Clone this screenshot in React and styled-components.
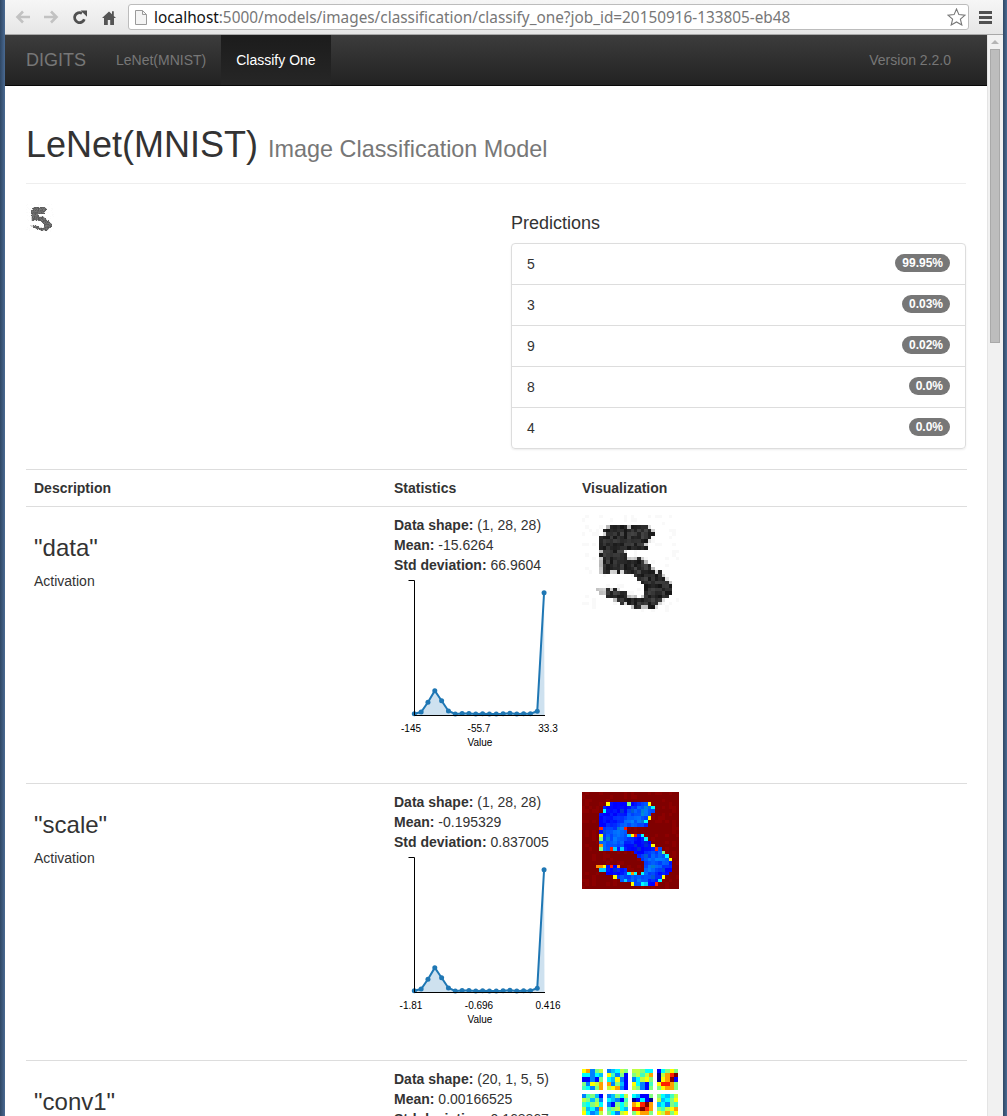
import React from "react";
import styled, { createGlobalStyle } from "styled-components";

const GlobalStyle = createGlobalStyle`
	html, body {
		margin: 0;
		height: 100%;
		overflow: hidden;
		background: #fff;
	}
	body {
		font-family: "Liberation Sans", Arial, sans-serif;
		font-size: 14px;
		line-height: 20px;
		color: #333;
	}
`;

const Win = styled.div`
	display: flex;
	width: 1007px;
	height: 1116px;
	overflow: hidden;
`;

const WinEdge = styled.div`
	flex: none;
	width: ${p => p.$w}px;
	background: linear-gradient(90deg, #2f4764, #4a6a92);
`;

const Main = styled.div`
	flex: 1;
	min-width: 0;
	display: flex;
	flex-direction: column;
`;

const Toolbar = styled.div`
	flex: none;
	height: 34px;
	display: flex;
	align-items: center;
	background: linear-gradient(#f6f6f6, #e6e6e6);
	border-bottom: 1px solid #a8a8a8;
`;

const ToolIcon = styled.svg`
	flex: none;
	display: block;
	margin-left: ${p => p.$ml}px;
`;

const Omnibox = styled.div`
	flex: none;
	width: 841px;
	height: 26px;
	box-sizing: border-box;
	margin-left: 12px;
	padding: 0 2px 0 6px;
	display: flex;
	align-items: center;
	background: #fff;
	border: 1px solid #bcbcbc;
	border-radius: 3px;
`;

const UrlText = styled.div`
	flex: 1;
	margin-left: 7px;
	font-family: "Noto Sans", sans-serif;
	font-size: 15.33px;
	white-space: nowrap;
	color: #777;
	b {
		font-weight: 400;
		color: #111;
	}
`;

const Content = styled.div`
	flex: 1;
	min-height: 0;
	display: flex;
`;

const Page = styled.div`
	flex: 1;
	min-width: 0;
`;

const Navbar = styled.div`
	height: 50px;
	display: flex;
	align-items: stretch;
	padding: 0 36px 0 21px;
	background: linear-gradient(#3c3c3c, #222);
	border-bottom: 1px solid #080808;
`;

const Brand = styled.div`
	display: flex;
	align-items: center;
	font-size: 18px;
	color: #777;
	margin-right: 30px;
`;

const NavLink = styled.div`
	display: flex;
	align-items: center;
	padding: 0 15px;
	margin-left: ${p => (p.$active ? 0 : -15)}px;
	color: ${p => (p.$active ? "#fff" : "#777")};
	background: ${p => (p.$active ? "linear-gradient(#1c1c1c, #262626)" : "none")};
`;

const NavRight = styled.div`
	margin-left: auto;
	display: flex;
	align-items: center;
	color: #777;
`;

const Wrap = styled.div`
	padding: 0 20px 0 21px;
`;

const PageHeader = styled.div`
	margin-right: 1px;
	padding: 39px 0 14px;
	border-bottom: 1px solid #eee;
`;

const Title = styled.h1`
	margin: 0;
	font-size: 36px;
	font-weight: 500;
	line-height: 40px;
	small {
		font-size: 23.4px;
		font-weight: 400;
		color: #777;
	}
`;

const TopRow = styled.div`
	display: flex;
	justify-content: space-between;
	margin-right: 1px;
	margin-bottom: 20px;
`;

const InputImage = styled.div`
	margin-top: 20px;
`;

const PredictionCol = styled.div`
	width: 455px;
	padding-top: 29px;
`;

const PredictionTitle = styled.div`
	font-size: 18px;
	line-height: 20px;
	margin-bottom: 10px;
`;

const PredictionList = styled.div`
	border: 1px solid #ddd;
	border-radius: 4px;
	box-shadow: 0 1px 2px rgba(0, 0, 0, 0.075);
`;

const PredictionItem = styled.div`
	display: flex;
	justify-content: space-between;
	align-items: flex-start;
	padding: 10px 15px;
	& + & {
		border-top: 1px solid #ddd;
	}
`;

const Badge = styled.span`
	padding: 3px 7px;
	font-size: 12px;
	font-weight: 700;
	line-height: 12px;
	color: #fff;
	background: #777;
	border-radius: 10px;
`;

const TableRow = styled.div`
	display: grid;
	grid-template-columns: 360px 188px 1fr;
	border-top: ${p => (p.$head ? "1px solid #ddd" : "0")};
	border-bottom: 1px solid #ddd;
`;

const HeadCell = styled.div`
	padding: 8px;
	font-weight: 700;
`;

const Cell = styled.div`
	padding: 8px;
`;

const LayerName = styled.h3`
	margin: 20px 0 10px;
	font-size: 24px;
	font-weight: 500;
	line-height: 26px;
`;

const StatLine = styled.div`
	white-space: nowrap;
	b {
		font-weight: 700;
	}
`;

const ChartSvg = styled.svg`
	display: block;
	overflow: visible;
	text {
		font-family: "Liberation Sans", Arial, sans-serif;
		font-size: 10px;
		fill: #000;
		text-anchor: middle;
	}
`;

const PixelSvg = styled.svg`
	display: block;
	shape-rendering: crispEdges;
`;

const TileGrid = styled.div`
	display: grid;
	grid-template-columns: repeat(4, 21px);
	gap: 4px;
`;

const Scrollbar = styled.div`
	flex: none;
	width: 16px;
	box-sizing: border-box;
	padding: 5px 3px 0 2px;
	background: #f1f1f1;
	border-left: 1px solid #e4e4e4;
`;

const ScrollArrow = styled.div`
	width: 0;
	height: 0;
	margin: 0 auto 5px;
	border-left: 4px solid transparent;
	border-right: 4px solid transparent;
	border-bottom: 4px solid #b5b5b5;
`;

const ScrollThumb = styled.div`
	height: 294px;
	background: #bdbdbd;
	border: 1px solid #a9a9a9;
	box-sizing: border-box;
`;

// the digit, as runs of columns per row of the 28x28 input
const DIGIT = {
	3: [[7, 19]],
	4: [[6, 20]],
	5: [[6, 20]],
	6: [[5, 19]],
	7: [[5, 19]],
	8: [[5, 18]],
	9: [[5, 18]],
	10: [[5, 12]],
	11: [[5, 12]],
	12: [[5, 17]],
	13: [[5, 18]],
	14: [[5, 19]],
	15: [[5, 20]],
	16: [[5, 22]],
	17: [[15, 23]],
	18: [[16, 24]],
	19: [[17, 25]],
	20: [[18, 25]],
	21: [[4, 10], [18, 25]],
	22: [[5, 12], [18, 25]],
	23: [[7, 15], [17, 24]],
	24: [[9, 23]],
	25: [[11, 22]],
	26: [[14, 21]]
};

const inDigit = (r, c) => (DIGIT[r] || []).some(([a, b]) => c >= a && c <= b);

const isEdge = (r, c) =>
	!inDigit(r - 1, c) || !inDigit(r + 1, c) || !inDigit(r, c - 1) || !inDigit(r, c + 1);

const noise = (r, c) => {
	const v = Math.sin(r * 127.1 + c * 311.7 + 3.3) * 43758.5453;
	return v - Math.floor(v);
};

const grey = v => `rgb(${v},${v},${v})`;

const greyCell = fade => (r, c) => {
	const n = noise(r, c);
	let v;
	if (inDigit(r, c)) {
		v = isEdge(r, c) && n > 0.6 ? 110 + Math.round(n * 120) : 20 + Math.round(n * 50);
	} else {
		v = n > 0.85 ? 249 : 255;
	}
	return grey(Math.round(255 - (255 - v) * fade));
};

const HOT = ["#00ffff", "#80ff80", "#ffff00", "#ff9000", "#ff2000", "#00d0ff"];

const jetCell = (r, c) => {
	const n = noise(r, c);
	if (!inDigit(r, c)) return n > 0.78 ? "#8c0000" : "#800000";
	if (isEdge(r, c) && n > 0.62) return HOT[Math.floor(n * 97) % HOT.length];
	// blue patches that drift slowly across the digit
	const g = Math.round(55 + 50 * Math.sin(r / 2.6 + c / 3.1) + 70 * (n - 0.5));
	return `rgb(0,${Math.max(0, g)},${n > 0.9 ? 215 : 255})`;
};

const PixelMap = ({ size, colorAt }) => {
	const cells = [];
	for (let r = 0; r < 28; r++) {
		for (let c = 0; c < 28; c++) {
			cells.push(<rect key={r + "-" + c} x={c} y={r} width="1.02" height="1.02" fill={colorAt(r, c)} />);
		}
	}
	return (
		<PixelSvg width={size} height={size} viewBox="0 0 28 28">
			{cells}
		</PixelSvg>
	);
};

const JET = {
	n: "#00008f",
	b: "#0000ff",
	a: "#0080ff",
	s: "#00bfff",
	c: "#00ffff",
	t: "#40ffbf",
	g: "#80ff80",
	l: "#bfff40",
	y: "#ffff00",
	o: "#ff9f00",
	r: "#ff2000",
	d: "#800000"
};

const TILES = [
	["yoagl", "ccacs", "bbabg", "gaylo", "tcago"],
	["asclg", "ytagb", "csyab", "oagsb", "lyoab"],
	["llgcc", "gltlo", "aclyg", "ycabt", "lgabg"],
	["bcgyg", "nlord", "nyodb", "yrrog", "gyoog"],
	["atgsb", "lgsga", "tcglc", "lscao", "ycasl"],
	["asgcl", "csabt", "abgcg", "tglcs", "gcaly"],
	["csbbg", "nbcbn", "oyrdo", "rrdro", "gyoog"],
	["gcstl", "lscgy", "scagt", "gtlyo", "ylogy"],
	["oasyg", "cgbta", "ltaoy", "sgcbl", "yoslg"],
	["tylab", "cgoal", "bsytc", "gacoy", "labts"],
	["gcoas", "lybsg", "atgcy", "oscbl", "tygao"],
	["bayog", "csgtl", "ylabc", "gosty", "atlyg"]
];

const Tile = ({ rows }) => (
	<PixelSvg width="21" height="21" viewBox="0 0 5 5">
		{rows.map((row, r) =>
			row.split("").map((k, c) => (
				<rect key={r + "-" + c} x={c} y={r} width="1.01" height="1.01" fill={JET[k]} />
			))
		)}
	</PixelSvg>
);

// histogram heights, same shape for both layers at this scale
const HIST = [138.7, 137, 127.3, 115.7, 125.7, 136, 139, 138.5, 138.5, 139, 138.7, 139, 139, 138.7, 138.2, 139, 138.7, 138.7, 136.3, 17.7];
const HIST_X = i => 20.3 + i * 6.83;

const Histogram = ({ ticks }) => {
	const pts = HIST.map((y, i) => `${HIST_X(i)},${y}`).join(" ");
	return (
		<ChartSvg width="170" height="200" viewBox="0 0 170 200">
			<polygon points={`20.3,140 ${pts} 150.5,140`} fill="#1f77b4" fillOpacity="0.22" />
			<polyline points={pts} fill="none" stroke="#1f77b4" strokeWidth="2" />
			{HIST.map((y, i) => (
				<circle key={i} cx={HIST_X(i)} cy={y} r="2.5" fill="#1f77b4" />
			))}
			<path d="M14.5 5.5H20.5V140.5H151" fill="none" stroke="#000" strokeWidth="1" />
			<text x="17" y="157">{ticks[0]}</text>
			<text x="85" y="157">{ticks[1]}</text>
			<text x="154" y="157">{ticks[2]}</text>
			<text x="86" y="171">Value</text>
		</ChartSvg>
	);
};

const LayerRow = ({ name, shape, mean, std, ticks, children }) => (
	<TableRow>
		<Cell>
			<LayerName>"{name}"</LayerName>
			Activation
		</Cell>
		<Cell>
			<StatLine><b>Data shape:</b> {shape}</StatLine>
			<StatLine><b>Mean:</b> {mean}</StatLine>
			<StatLine><b>Std deviation:</b> {std}</StatLine>
			{ticks && <Histogram ticks={ticks} />}
		</Cell>
		<Cell>{children}</Cell>
	</TableRow>
);

const PREDICTIONS = [
	["5", "99.95%"],
	["3", "0.03%"],
	["9", "0.02%"],
	["8", "0.0%"],
	["4", "0.0%"]
];

const App = () => (
	<Win>
		<GlobalStyle />
		<WinEdge $w={5} />
		<Main>
			<Toolbar>
				<ToolIcon $ml={10} width="15" height="14" viewBox="0 0 15 14" fill="none" stroke="#c2c2c2" strokeWidth="2.6">
					<path d="M8 1.5L2.5 7L8 12.5M2.5 7H15" />
				</ToolIcon>
				<ToolIcon $ml={14} width="15" height="14" viewBox="0 0 15 14" fill="none" stroke="#c2c2c2" strokeWidth="2.6">
					<path d="M7 1.5L12.5 7L7 12.5M12.5 7H0" />
				</ToolIcon>
				<ToolIcon $ml={13} width="15" height="15" viewBox="0 0 15 15">
					<path d="M12.3 9.2A5 5 0 1 1 10 3.2" fill="none" stroke="#505050" strokeWidth="2.8" />
					<path d="M8.6 0.5H15V6.8Z" fill="#505050" />
				</ToolIcon>
				<ToolIcon $ml={15} width="14" height="15" viewBox="0 0 14 15">
					<path d="M7 1.5L0 8H2V15H5.8V10H8.2V15H12V8H14L11.8 6V1.2H10V4.2Z" fill="#555" />
				</ToolIcon>
				<Omnibox>
					<svg width="12" height="15" viewBox="0 0 12 15" fill="#f4f4f4" stroke="#9a9a9a">
						<path d="M1 .5H7.5L11.5 4.5V14.5H.5V.5Z" />
						<path d="M7.5 .5V4.5H11.5" fill="none" />
					</svg>
					<UrlText>
						<b>localhost</b>:5000/models/images/classification/classify_one?job_id=20150916-133805-eb48
					</UrlText>
					<svg width="19" height="18" viewBox="0 0 19 18" fill="#fff" stroke="#777" strokeWidth="1.1">
						<path d="M9.5 1L11.9 6.6L18 7.2L13.4 11.2L14.8 17L9.5 14L4.2 17L5.6 11.2L1 7.2L7.1 6.6Z" />
					</svg>
				</Omnibox>
				<ToolIcon $ml={10} width="13" height="13" viewBox="0 0 13 13" fill="#505050">
					<path d="M0 0H13V3H0ZM0 5H13V8H0ZM0 10H13V13H0Z" />
				</ToolIcon>
			</Toolbar>
			<Content>
				<Page>
					<Navbar>
						<Brand>DIGITS</Brand>
						<NavLink>LeNet(MNIST)</NavLink>
						<NavLink $active>Classify One</NavLink>
						<NavRight>Version 2.2.0</NavRight>
					</Navbar>
					<Wrap>
						<PageHeader>
							<Title>LeNet(MNIST) <small>Image Classification Model</small></Title>
						</PageHeader>
						<TopRow>
							<InputImage>
								<PixelMap size={28} colorAt={greyCell(0.72)} />
							</InputImage>
							<PredictionCol>
								<PredictionTitle>Predictions</PredictionTitle>
								<PredictionList>
									{PREDICTIONS.map(([label, pct]) => (
										<PredictionItem key={label}>
											{label}
											<Badge>{pct}</Badge>
										</PredictionItem>
									))}
								</PredictionList>
							</PredictionCol>
						</TopRow>
						<TableRow $head>
							<HeadCell>Description</HeadCell>
							<HeadCell>Statistics</HeadCell>
							<HeadCell>Visualization</HeadCell>
						</TableRow>
						<LayerRow name="data" shape="(1, 28, 28)" mean="-15.6264" std="66.9604" ticks={["-145", "-55.7", "33.3"]}>
							<PixelMap size={97} colorAt={greyCell(1)} />
						</LayerRow>
						<LayerRow name="scale" shape="(1, 28, 28)" mean="-0.195329" std="0.837005" ticks={["-1.81", "-0.696", "0.416"]}>
							<PixelMap size={97} colorAt={jetCell} />
						</LayerRow>
						<LayerRow name="conv1" shape="(20, 1, 5, 5)" mean="0.00166525" std="0.168867">
							<TileGrid>
								{TILES.map((rows, i) => (
									<Tile key={i} rows={rows} />
								))}
							</TileGrid>
						</LayerRow>
					</Wrap>
				</Page>
				<Scrollbar>
					<ScrollArrow />
					<ScrollThumb />
				</Scrollbar>
			</Content>
		</Main>
		<WinEdge $w={4} />
	</Win>
);

export default App;
